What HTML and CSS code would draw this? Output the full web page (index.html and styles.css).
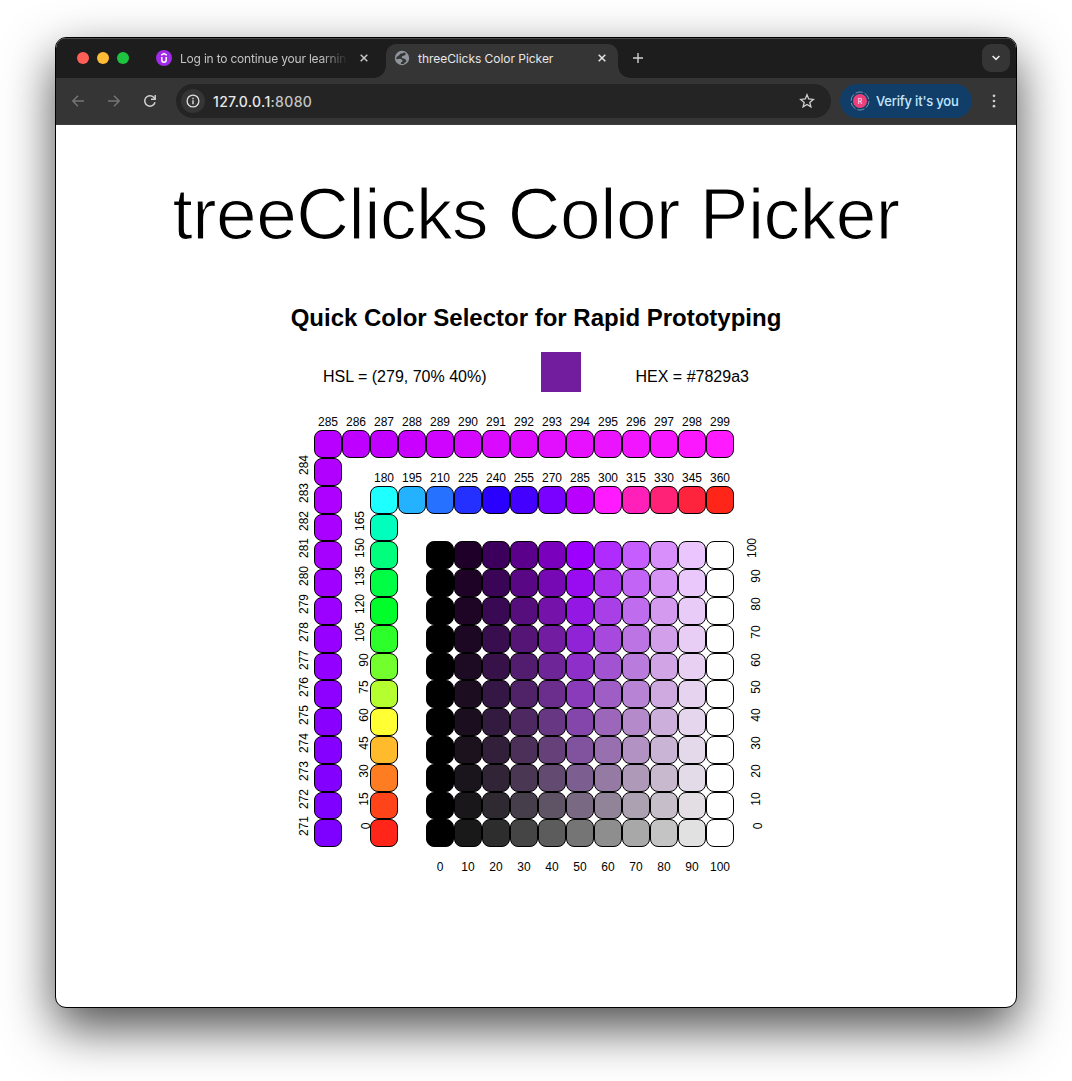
FILE: index.html
```html
<!DOCTYPE html>
<html lang="en">
<head>
<meta charset="utf-8">
<title>threeClicks Color Picker</title>
<link rel="stylesheet" href="styles.css">
</head>
<body>
<div class="window">
  <header class="tabstrip">
    <div class="lights"><i class="light red"></i><i class="light amber"></i><i class="light green"></i></div>
    <div class="tab">
      <svg class="favicon" viewBox="0 0 16 16"><circle cx="8" cy="8" r="8" fill="#a02be8"/><path d="M5.200 5.100 8 3.500l2.800 1.600M5.800 7v3a2.200 2.200 0 0 0 4.400 0V7" fill="none" stroke="#fff" stroke-width="1.500"/></svg>
      <span class="tab-title faded">Log in to continue your learnin</span>
      <svg class="close" viewBox="0 0 8 8"><path d="M.7.7l6.600 6.600M7.300.7L.7 7.300" stroke="#c8c8c8" stroke-width="1.500"/></svg>
    </div>
    <div class="tab active">
      <svg class="favicon globe" viewBox="0 0 16 16"><circle cx="8" cy="8" r="7.200" fill="#90959d"/><path d="M9.800 2.200C9.600 3.300 8 3.200 6.800 3.600c-1 .4-1.200 1.500-2 2L2.400 7.200c-.2.900 0 1.700.4 2.300 1.200-.8 2.900-1.100 4.100-.4 1.100.6 1.700 1.200 1.700 1.900 0 .8-1.200.8-1.500 1.500l-.3 1.500 2.900-.1c.3-1.300 2.300-1.600 2.600-3 .2-1.200-.9-1.600-1.900-2.200-.9-.5-2.700-.3-2.700-1.500C7.700 6 9.200 6.100 10.200 5.600c.9-.5 1.600-1.200 1.600-2.200z" fill="#353535"/></svg>
      <span class="tab-title">threeClicks Color Picker</span>
      <svg class="close" viewBox="0 0 8 8"><path d="M.7.7l6.600 6.600M7.300.7L.7 7.300" stroke="#e6e6e6" stroke-width="1.500"/></svg>
    </div>
    <svg class="plus" viewBox="0 0 10 10"><path d="M5 0v10M0 5h10" stroke="#d0d0d0" stroke-width="1.400"/></svg>
    <div class="tab-search"><svg width="8" height="6" viewBox="0 0 8 6"><path d="M.6 1 4 4.400 7.400 1" fill="none" stroke="#e8e8e8" stroke-width="1.600"/></svg></div>
  </header>
  <nav class="toolbar">
    <div class="nav-buttons">
      <svg width="14" height="14" viewBox="0 0 14 14"><path d="M13 7H1.800M7 1.800 1.800 7 7 12.200" fill="none" stroke="#757575" stroke-width="1.400"/></svg>
      <svg width="14" height="14" viewBox="0 0 14 14"><path d="M1 7h11.200M7 1.800 12.200 7 7 12.200" fill="none" stroke="#757575" stroke-width="1.400"/></svg>
      <svg width="14" height="14" viewBox="0 0 14 14"><path d="M12 8.200A5.200 5.200 0 1 1 10.700 3.300L12.200 4.800" fill="none" stroke="#d0d0d0" stroke-width="1.500"/><path d="M12.200 1v4.300H8" fill="none" stroke="#d0d0d0" stroke-width="1.500"/></svg>
    </div>
    <div class="omnibox">
      <span class="site-info"><svg width="14" height="14" viewBox="0 0 14 14"><circle cx="7" cy="7" r="5.900" fill="none" stroke="#e0e0e0" stroke-width="1.300"/><path d="M7 6.200v4M7 3.700v1.500" stroke="#e0e0e0" stroke-width="1.400"/></svg></span>
      <span class="url">127.0.0.1<span class="port">:8080</span></span>
      <svg class="star" width="16" height="16" viewBox="0 0 16 16"><path d="M8 1.800 9.700 6l4.600.4-3.500 3 1.100 4.500L8 11.500l-3.900 2.400 1.100-4.500-3.500-3L6.300 6z" fill="none" stroke="#d0d0d0" stroke-width="1.300"/></svg>
    </div>
    <div class="verify">
      <span class="avatar"><svg width="20" height="20" viewBox="0 0 20 20"><circle cx="10" cy="10" r="9" fill="none" stroke="#7893ad" stroke-width="1" stroke-dasharray="7.400 2"/><circle cx="10" cy="10" r="7" fill="#ec407a"/></svg><b>R</b></span>
      <span class="verify-text">Verify it's you</span>
    </div>
    <svg class="menu" width="4" height="14" viewBox="0 0 4 14"><g fill="#cfcfcf"><circle cx="2" cy="1.800" r="1.350"/><circle cx="2" cy="7" r="1.350"/><circle cx="2" cy="12.200" r="1.350"/></g></svg>
  </nav>
  <main class="page">
    <h1>treeClicks Color Picker</h1>
    <h2>Quick Color Selector for Rapid Prototyping</h2>
    <div class="readout">
      <span class="hsl">HSL = (279, 70% 40%)</span>
      <span class="swatch"></span>
      <span class="hex">HEX = #7829a3</span>
    </div>
    <div class="picker" id="picker"></div>
  </main>
</div>
<script src="picker.js"></script>
</body>
</html>
```
FILE: picker.js
```js
// Builds the three sets of swatches: fine hues, coarse hues, and the
// saturation / lightness matrix, each with its axis labels.
const picker = document.getElementById('picker');

function add(row, col, className, text, color) {
  const el = document.createElement('div');
  el.className = className;
  el.style.gridArea = row + ' / ' + col;
  if (color) el.style.backgroundColor = color;
  if (text !== null) {
    const span = document.createElement('span');
    span.textContent = text;
    el.append(span);
  }
  picker.append(el);
}

const fine = ['#7e00ff', '#8000ff', '#8300ff', '#8600ff', '#8a00ff', '#8e00ff', '#9300ff', '#9700ff',
  '#9c00ff', '#a000ff', '#a600ff', '#aa00ff', '#ae00ff', '#b200ff', '#b700ff', '#bd00ff', '#c200ff',
  '#c900ff', '#cf04ff', '#d407ff', '#da09ff', '#dd0cff', '#e20fff', '#e711ff', '#eb14ff', '#f116ff',
  '#f617ff', '#fb18ff', '#ff1aff'];
const coarse = ['#ff2619', '#ff441a', '#ff7d22', '#ffbb2b', '#ffff33', '#b5ff30', '#72ff2d', '#2cff2a',
  '#00ff2a', '#00ff44', '#00ff7d', '#00ffbd', '#1effff', '#24b2ff', '#2671ff', '#2330ff', '#2a00ff',
  '#4300ff', '#7a00ff', '#b900ff', '#ff1aff', '#ff1fb9', '#ff2277', '#ff243d', '#ff2619'];
const vivid = [[0, 0, 0], [31, 0, 41], [60, 0, 92], [91, 0, 139], [122, 0, 190], [157, 0, 255],
  [176, 43, 253], [197, 93, 255], [216, 143, 251], [235, 197, 254], [255, 255, 255]];
const grey = [0, 25, 45, 69, 92, 117, 142, 168, 196, 225, 255];

fine.forEach((color, i) => {
  const hue = 271 + i;
  if (i < 14) {
    add(16 - i, 1, 'label side', hue, null);
    add(16 - i, 2, 'cell', null, color);
  } else {
    add(1, i - 12, 'label', hue, null);
    add(2, i - 12, 'cell', null, color);
  }
});

coarse.forEach((color, i) => {
  if (i < 12) {
    add(16 - i, 3, 'label side', i * 15, null);
    add(16 - i, 4, 'cell', null, color);
  } else {
    add(3, i - 8, 'label', i * 15, null);
    add(4, i - 8, 'cell', null, color);
  }
});

for (let s = 0; s <= 10; s++) {
  for (let l = 0; l <= 10; l++) {
    const rgb = vivid[l].map(v => Math.round(grey[l] + (v - grey[l]) * s / 10));
    add(16 - s, 6 + l, 'cell', null, 'rgb(' + rgb + ')');
  }
  add(16 - s, 17, 'label side', s * 10, null);
  add(17, 6 + s, 'label', s * 10, null);
}
```
FILE: styles.css
```css
* { box-sizing: border-box; }
body {
  margin: 0; padding: 37px 0 0 55px; height: 1081px; background: #fff; overflow: hidden;
  font-family: "Liberation Sans", Arial, sans-serif; color: #000;
}
svg { display: block; flex: none; }

.window {
  width: 962px; height: 971px;
  border: 1px solid #000; border-radius: 11px; overflow: hidden; background: #fff;
  box-shadow: 0 20px 50px rgba(0, 0, 0, .7);
  display: flex; flex-direction: column;
}

.tabstrip {
  height: 40px; background: #1d1d1d; box-shadow: inset 0 1px 0 #4a4a4a;
  display: flex; align-items: center; flex: none;
  font-family: Inter, sans-serif; font-size: 12px; color: #c3c3c3;
}
.lights { display: flex; gap: 8px; margin-left: 21px; }
.light { width: 12px; height: 12px; border-radius: 50%; }
.red { background: #ff5f57; }
.amber { background: #febc36; }
.green { background: #1ec33f; }

.tab { display: flex; align-items: center; margin-left: 27px; width: 213px; height: 28px; }
.favicon { width: 16px; height: 16px; }
.tab-title { margin-left: 8px; width: 168px; white-space: nowrap; }
.faded {
  letter-spacing: -.2px;
  -webkit-mask-image: linear-gradient(90deg, #000 84%, transparent 100%);
  mask-image: linear-gradient(90deg, #000 84%, transparent 100%);
}
.close { width: 8px; height: 8px; margin-left: 12px; }
.tab.active {
  position: relative; width: 232px; height: 34px; margin: 6px 0 0 17px; padding: 0 0 6px 8px;
  background: #353535; border-radius: 10px 10px 0 0; color: #e6e6e6;
}
.tab.active::before, .tab.active::after {
  content: ""; position: absolute; bottom: 0; width: 12px; height: 12px;
}
.tab.active::before { left: -12px; background: radial-gradient(circle at 0 0, transparent 11.5px, #353535 12px); }
.tab.active::after { right: -12px; background: radial-gradient(circle at 100% 0, transparent 11.5px, #353535 12px); }
.tab.active .tab-title { letter-spacing: -.04px; }
.plus { width: 10px; height: 10px; margin-left: 15px; }
.tab-search {
  width: 28px; height: 28px; margin: 0 6px 0 auto; border-radius: 9px; background: #353535;
  display: flex; align-items: center; justify-content: center;
}

.toolbar {
  height: 47px; flex: none; display: flex; align-items: center;
  background: #353535; font-family: Inter, sans-serif;
  border-bottom: 1px solid #3d3d3d;
}
.nav-buttons { display: flex; gap: 22px; margin-left: 15px; }
.omnibox {
  width: 655px; height: 34px; margin-left: 19px; padding: 0 16px 0 5px; border-radius: 17px;
  background: #242424; display: flex; align-items: center;
}
.site-info {
  width: 24px; height: 24px; border-radius: 50%; background: #353535;
  display: flex; align-items: center; justify-content: center;
}
.url { margin-left: 8px; font-size: 14px; font-weight: 500; color: #e8e8e8; letter-spacing: .33px; }
.port { color: #c4c4c4; }
.star { margin-left: auto; }
.verify {
  width: 132px; height: 34px; margin-left: 9px; padding-left: 10px; border-radius: 17px;
  background: #113e68; color: #c2e7ff; display: flex; align-items: center;
}
.avatar { display: grid; place-items: center; }
.avatar > * { grid-area: 1 / 1; }
.avatar b { font-size: 7px; font-weight: 400; color: #fff; }
.verify-text { margin-left: 6px; font-size: 13px; font-weight: 500; white-space: nowrap; letter-spacing: -.2px; }
.menu { margin-left: 20px; }

.page { flex: 1; display: flex; flex-direction: column; }
h1 {
  margin: 47px 0 0; height: 84px; line-height: 84px; text-align: center;
  font-size: 73px; font-weight: 400; letter-spacing: -.48px; white-space: nowrap;
  -webkit-text-stroke: 1.2px #fff;
}
h2 { margin: 48px 0 0; height: 28px; line-height: 28px; text-align: center; font-size: 24px; font-weight: 700; white-space: nowrap; }
.readout { margin: 20px 0 0; height: 40px; display: flex; font-size: 16px; line-height: 50px; white-space: nowrap; }
.hsl { width: 218px; margin-left: 267px; }
.swatch { width: 40px; height: 40px; background: #721c9e; }
.hex { margin-left: 54.5px; }

.picker {
  display: grid; margin: 10.4px 0 0 230px; width: 476px;
  grid-template-columns: repeat(17, 28px);
  grid-template-rows: repeat(17, 27.8px);
}
.cell { border: 1px solid #000; border-radius: 8px; }
.label { display: flex; align-items: flex-end; justify-content: center; padding-bottom: 1px; font-size: 12px; line-height: 14px; }
.label.side { align-items: flex-start; justify-content: flex-end; padding-bottom: 0; }
.side span { transform: rotate(-90deg); }
```
